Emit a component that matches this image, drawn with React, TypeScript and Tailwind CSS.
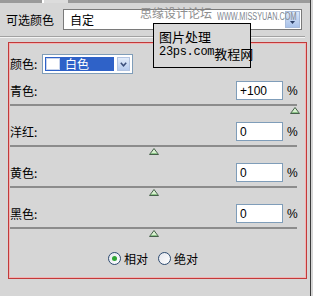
const rows = [
  { label: "青色:", value: 100, text: "+100" },
  { label: "洋红:", value: 0, text: "0" },
  { label: "黄色:", value: 0, text: "0" },
  { label: "黑色:", value: 0, text: "0" },
];

const Thumb: React.FC<{ value: number }> = ({ value }) => {
  // centre of the thumb, measured from the left end of the track
  const center = 2 + ((value + 100) / 200) * 283;
  return (
    <div className="relative h-[7px] mt-[1px]">
      <svg
        width="10"
        height="7"
        viewBox="0 0 10 7"
        className="absolute top-0"
        style={{ left: center - 5 }}
      >
        <polygon points="5,0.5 9.5,6.5 0.5,6.5" fill="#d8f0d0" stroke="#46604a" strokeWidth="1" />
        <line x1="2" y1="5.5" x2="8" y2="5.5" stroke="#8cc488" strokeWidth="1" />
      </svg>
    </div>
  );
};

const Radio: React.FC<{ checked?: boolean; label: string }> = ({ checked, label }) => (
  <div className="flex items-center gap-[3px]">
    <div className="w-[13px] h-[13px] rounded-full border border-[#2c4a70] bg-gradient-to-br from-[#e4e6ee] to-white flex items-center justify-center">
      {checked && <div className="w-[5px] h-[5px] rounded-full bg-[#2fa534]" />}
    </div>
    <span className="text-[12px] leading-none text-black">{label}</span>
  </div>
);

const App: React.FC = () => {
  return (
    <div className="w-[313px] h-[296px] bg-[#d6d6d6] overflow-hidden relative font-['Noto_Sans_CJK_SC',sans-serif] text-black">
      <div className="w-[311px] h-full border-r border-[#3c3c3c] flex flex-col">
        {/* tab strip remnants */}
        <div className="flex h-[3px]">
          <div className="w-[42px] bg-[#9a9a9a]" />
          <div className="w-[2px] bg-white" />
          <div className="w-[24px] bg-[#dcdcdc]" />
          <div className="flex-1 bg-[#9a9a9a]" />
        </div>

        {/* header: 可选颜色 */}
        <div className="flex items-center h-[21px] mt-[6px]">
          <span className="w-[63px] pl-[6px] text-[12px] leading-none">可选颜色</span>
          <div className="w-[239px] h-[21px] border border-[#7a7a7a] bg-white flex items-center">
            <span className="pl-[6px] text-[12px] leading-none flex-1">自定</span>
            <div className="w-[15px] h-[17px] mr-[1px] border border-[#a8bcdc] bg-gradient-to-b from-[#dce8f8] to-[#a9c2ea] flex items-end justify-center pb-[3px]">
              <svg width="5" height="3" viewBox="0 0 5 3">
                <polygon points="0,0 5,0 2.5,3" fill="#2b3f66" />
              </svg>
            </div>
          </div>
        </div>

        {/* etched separator */}
        <div className="w-[305px] h-[2px] mt-[6px] border-t border-[#a2a2a2] border-b border-b-[#f4f4f4]" />

        {/* red framed panel */}
        <div className="ml-[8px] mt-[4px] w-[299px] h-[237px] border border-[#c23a3a] shadow-[inset_0_0_0_1px_#f2b4b4] flex flex-col">
          <div className="flex items-center mt-[11px] pl-[1px]">
            <span className="w-[32px] text-[12px] leading-none">颜色:</span>
            <div className="w-[91px] h-[20px] border border-[#7f9db9] bg-white p-[2px] flex gap-[3px]">
              <div className="flex-1 bg-[#2f62c8] flex items-center pl-[1px]">
                <div className="w-[14px] h-[12px] bg-white border border-[#c8d4ec]" />
                <span className="ml-[5px] text-[12px] leading-none text-white">白色</span>
              </div>
              <div className="w-[13px] border border-[#b2c4e2] bg-gradient-to-b from-[#e2ecfa] to-[#b6cbee] flex items-center justify-center">
                <svg width="7" height="5" viewBox="0 0 7 5">
                  <polyline points="0.8,0.8 3.5,3.8 6.2,0.8" fill="none" stroke="#3a4e7a" strokeWidth="1.5" />
                </svg>
              </div>
            </div>
          </div>

          <div className="flex flex-col gap-[8px] mt-[7px] pl-[1px]">
            {rows.map((r) => (
              <div key={r.label} className="w-[287px]">
                <div className="flex items-center justify-between h-[19px]">
                  <span className="text-[12px] leading-none">{r.label}</span>
                  <div className="flex items-center">
                    <div className="w-[47px] h-[19px] border border-[#7f9db9] bg-white flex items-center pl-[3px] text-[12px] leading-none font-['Liberation_Sans',sans-serif]">
                      {r.text}
                    </div>
                    <span className="w-[14px] pl-[4px] text-[12px] leading-none font-['Liberation_Sans',sans-serif]">%</span>
                  </div>
                </div>
                <div className="mt-[4px] h-[2px] bg-[#8c8c8c]" />
                <Thumb value={r.value} />
              </div>
            ))}
          </div>

          <div className="mt-[15px] w-[287px] pl-[1px] flex justify-center gap-[10px]">
            <Radio checked label="相对" />
            <Radio label="绝对" />
          </div>
        </div>
      </div>

      {/* watermark text over the header */}
      <span className="absolute left-[140px] top-[7px] text-[12px] leading-none text-[#8e8e8e]">思缘设计论坛</span>
      <span className="absolute left-[217px] top-[12px] text-[10px] leading-none font-['Liberation_Sans',sans-serif] text-[#7f8790] scale-x-[0.73] origin-left whitespace-nowrap">
        WWW.MISSYUAN.COM
      </span>

      {/* watermark box */}
      <div className="absolute left-[153px] top-[23px] w-[98px] h-[45px] border border-black bg-[#d8d8d8] flex flex-col pl-[5px] pt-[6px] whitespace-nowrap">
        <span className="text-[13px] leading-none">图片处理</span>
        <div className="flex items-end mt-[3px]">
          <span className="shrink-0 text-[12px] leading-none font-['Liberation_Mono',monospace] mb-[2px] tracking-[-0.3px]">23ps.com</span>
          <span className="shrink-0 text-[13px] leading-none">教程网</span>
        </div>
      </div>
    </div>
  );
};

export default App;
